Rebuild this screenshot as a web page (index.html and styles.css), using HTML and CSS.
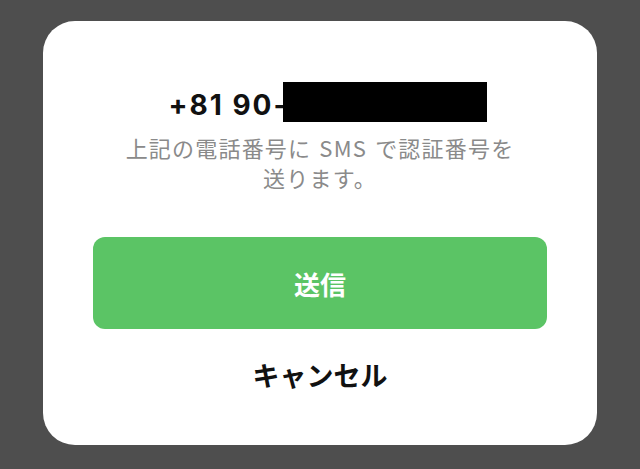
FILE: index.html
```html
<!DOCTYPE html>
<html lang="ja">
<head>
    <meta charset="UTF-8">
    <meta name="viewport" content="width=device-width, initial-scale=1.0">
    <title>SMS認証</title>
    <link rel="stylesheet" href="styles.css">
</head>
<body>
    <div class="dialog">
        <div class="phone">
            <span class="phone-prefix">+81 90-</span><span class="redacted"></span>
        </div>
        <p class="message">上記の電話番号に SMS で認証番号を<br>送ります。</p>
        <button class="button send">送信</button>
        <button class="button cancel">キャンセル</button>
    </div>
</body>
</html>
```

FILE: styles.css
```css
body {
    font-family: "Noto Sans CJK JP", "Noto Sans", sans-serif;
    background-color: #4e4e4e;
    margin: 0;
    height: 469px;
    padding-top: 21px;
    box-sizing: border-box;
    overflow: hidden;
}
.dialog {
    width: 554px;
    height: 424px;
    margin: 0 auto;
    background-color: #fff;
    border-radius: 32px;
    box-sizing: border-box;
    padding: 61px 40px 0;
    display: flex;
    flex-direction: column;
    align-items: center;
}
.phone {
    display: flex;
    align-items: flex-start;
    height: 40px;
    margin-left: 15px;
}
.phone-prefix {
    font-family: "Inter", "Liberation Sans", sans-serif;
    font-weight: 700;
    font-size: 28px;
    line-height: 34px;
    letter-spacing: 2px;
    color: #111;
    margin-top: 6px;
    margin-right: -6px;
}
.redacted {
    display: inline-block;
    width: 204px;
    height: 40px;
    background-color: #000;
}
.message {
    margin: 10px 0 0;
    text-align: center;
    font-size: 22px;
    line-height: 30px;
    letter-spacing: 1.2px;
    word-spacing: 2px;
    color: #8a8a8a;
}
.button {
    font-family: inherit;
    border: none;
    background: none;
    cursor: pointer;
    width: 454px;
}
.send {
    margin-top: 45px;
    height: 92px;
    background-color: #5bc465;
    border-radius: 12px;
    color: #fff;
    font-size: 26px;
    font-weight: 700;
}
.cancel {
    margin-top: 17px;
    height: 56px;
    color: #111;
    font-size: 27px;
    font-weight: 700;
}
```
